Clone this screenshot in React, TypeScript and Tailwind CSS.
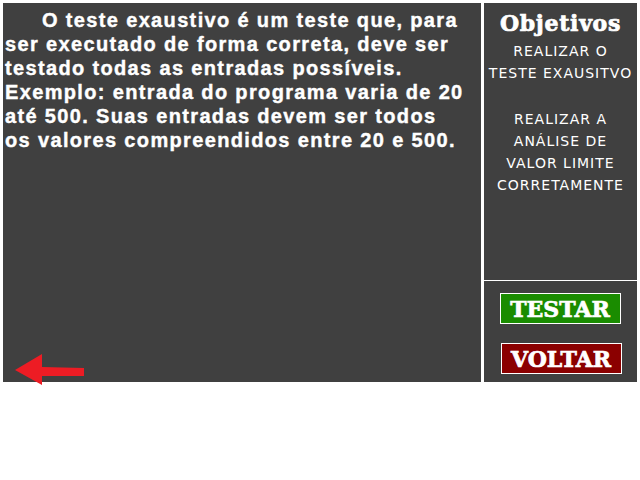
const serifHeavy =
	"font-['DejaVu_Serif',serif] font-bold [-webkit-text-stroke:0.7px_white]";

const paragraph = [
	"O teste exaustivo é um teste que, para",
	"ser executado de forma correta, deve ser",
	"testado todas as entradas possíveis.",
	"Exemplo: entrada do programa varia de 20",
	"até 500. Suas entradas devem ser todos",
	"os valores compreendidos entre 20 e 500.",
];

const ObjectiveItem = ({ lines }: { lines: string[] }) => (
	<div className="flex flex-col items-center">
		{lines.map((line) => (
			<span key={line} className="leading-[22px]">
				{line}
			</span>
		))}
	</div>
);

const App = () => {
	return (
		<div className="w-[640px] h-[480px] bg-white p-[3px] flex gap-[3px] items-start">
			{/* Main text panel */}
			<div className="relative w-[478px] h-[379px] bg-[#404040] text-white">
				<p className="font-['Liberation_Sans',Arial,sans-serif] font-bold text-[20px] tracking-[1.35px] leading-[24px] pl-[2px] pt-[5px] whitespace-nowrap [-webkit-text-stroke:0.4px_white]">
					{paragraph.map((line, i) => (
						<span key={line} className={i === 0 ? "block pl-[37px]" : "block"}>
							{line}
						</span>
					))}
				</p>
				<svg
					className="absolute left-[12px] top-[349px]"
					width="70"
					height="33"
					viewBox="0 0 70 33"
				>
					<path
						d="M0 18 L27 2 L27 15 L69 16 L69 24 L27 24 L27 33 Z"
						fill="#ed1c24"
					/>
				</svg>
			</div>

			{/* Sidebar */}
			<div className="w-[153px] h-[379px] flex flex-col gap-px">
				<div className="h-[277px] bg-[#404040] text-white flex flex-col items-center">
					<h2
						className={`${serifHeavy} text-[22px] leading-[26px] mt-[7px] tracking-[0.7px]`}
					>
						Objetivos
					</h2>
					<div className="font-['DejaVu_Sans',sans-serif] text-[14px] tracking-[1px] uppercase flex flex-col gap-[24px] mt-[4px] text-center">
						<ObjectiveItem lines={["Realizar o", "Teste exausitvo"]} />
						<ObjectiveItem
							lines={[
								"Realizar a",
								"Análise de",
								"Valor limite",
								"Corretamente",
							]}
						/>
					</div>
				</div>
				<div className="flex-1 bg-[#404040] flex flex-col items-center pt-[12px] gap-[19px]">
					<button
						className={`${serifHeavy} w-[121px] h-[31px] ml-[-1px] bg-[#1a8c00] border border-white text-white text-[22px] leading-none`}
					>
						TESTAR
					</button>
					<button
						className={`${serifHeavy} w-[121px] h-[31px] ml-[1px] bg-[#8b0000] border border-white text-white text-[22px] leading-none`}
					>
						VOLTAR
					</button>
				</div>
			</div>
		</div>
	);
};

export default App;
